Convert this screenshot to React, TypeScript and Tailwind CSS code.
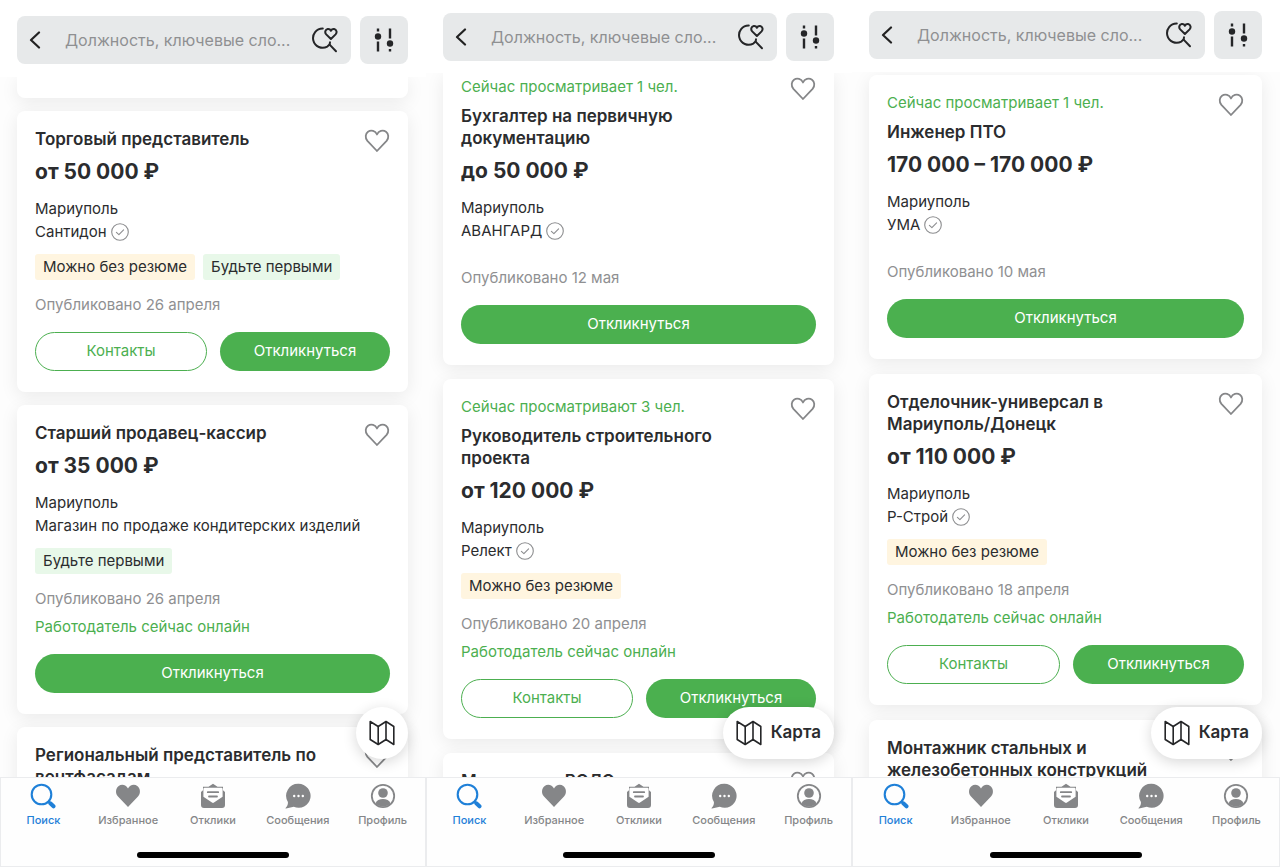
import React from "react";

type Job = {
  viewing?: string;
  title: string;
  salary?: string;
  city?: string;
  company?: string;
  verified?: boolean;
  noResume?: boolean;
  beFirst?: boolean;
  published?: string;
  online?: boolean;
  contacts?: boolean;
};

type Screen = {
  id: string;
  header: string;
  feed: string;
  scrolledTail?: boolean;
  scrolledFirst?: boolean;
  mapLabel?: boolean;
  jobs: Job[];
};

const screens: Screen[] = [
  {
    id: "a",
    header: "pt-4 pb-[13px]",
    feed: "gap-[13px]",
    scrolledTail: true,
    jobs: [
      {
        title: "Торговый представитель",
        salary: "от 50 000 ₽",
        city: "Мариуполь",
        company: "Сантидон",
        verified: true,
        noResume: true,
        beFirst: true,
        published: "Опубликовано 26 апреля",
        contacts: true,
      },
      {
        title: "Старший продавец-кассир",
        salary: "от 35 000 ₽",
        city: "Мариуполь",
        company: "Магазин по продаже кондитерских изделий",
        beFirst: true,
        published: "Опубликовано 26 апреля",
        online: true,
      },
      { title: "Региональный представитель по вентфасадам" },
    ],
  },
  {
    id: "b",
    header: "pt-[13px] pb-3",
    feed: "gap-[14px]",
    scrolledFirst: true,
    mapLabel: true,
    jobs: [
      {
        viewing: "Сейчас просматривает 1 чел.",
        title: "Бухгалтер на первичную документацию",
        salary: "до 50 000 ₽",
        city: "Мариуполь",
        company: "АВАНГАРД",
        verified: true,
        published: "Опубликовано 12 мая",
      },
      {
        viewing: "Сейчас просматривают 3 чел.",
        title: "Руководитель строительного проекта",
        salary: "от 120 000 ₽",
        city: "Мариуполь",
        company: "Релект",
        verified: true,
        noResume: true,
        published: "Опубликовано 20 апреля",
        online: true,
        contacts: true,
      },
      { title: "Монтажник ВОЛС" },
    ],
  },
  {
    id: "c",
    header: "pt-[11px] pb-[13px]",
    feed: "gap-[15px] pt-[3px]",
    mapLabel: true,
    jobs: [
      {
        viewing: "Сейчас просматривает 1 чел.",
        title: "Инженер ПТО",
        salary: "170 000 – 170 000 ₽",
        city: "Мариуполь",
        company: "УМА",
        verified: true,
        published: "Опубликовано 10 мая",
      },
      {
        title: "Отделочник-универсал в Мариуполь/Донецк",
        salary: "от 110 000 ₽",
        city: "Мариуполь",
        company: "Р-Строй",
        verified: true,
        noResume: true,
        published: "Опубликовано 18 апреля",
        online: true,
        contacts: true,
      },
      { title: "Монтажник стальных и железобетонных конструкций" },
    ],
  },
];

function BackIcon() {
  return (
    <svg width="12" height="18" viewBox="0 0 12 18" fill="none" stroke="#222" strokeWidth="2.2" strokeLinecap="round" strokeLinejoin="round" aria-hidden="true">
      <path d="M10 1.5 2 9l8 7.5" />
    </svg>
  );
}

function SearchHeartIcon() {
  return (
    <svg width="26" height="26" viewBox="0 0 26 26" fill="none" stroke="#252628" strokeWidth="2" strokeLinecap="round" strokeLinejoin="round" aria-hidden="true">
      <path d="M10.800 1.600A9.600 9.600 0 1 0 15.300 19.600L17.600 17.600" />
      <path d="M18 15.300 17.600 17.600 24 24.200" />
      <path d="M18.900 12 14.200 7.400C12.400 5.500 13.300 2.400 15.700 2c1.500-.2 2.700.6 3.200 1.800.6-1.200 1.700-2 3.200-1.800 2.500.4 3.300 3.500 1.500 5.400Z" />
    </svg>
  );
}

function FiltersIcon() {
  return (
    <svg width="20" height="26" viewBox="0 0 20 26" fill="none" stroke="#252628" strokeWidth="2.4" aria-hidden="true">
      <path d="M4 1.500v3M4 14.500v10M16 1.500v10M16 22v2.500" />
      <circle cx="4" cy="9.500" r="3.200" fill="#252628" stroke="none" />
      <circle cx="16" cy="16.500" r="3.200" fill="#252628" stroke="none" />
    </svg>
  );
}

function HeartIcon() {
  return (
    <svg width="26" height="24" viewBox="0 0 26 24" fill="none" stroke="#858688" strokeWidth="1.800" strokeLinejoin="round" aria-hidden="true">
      <path d="M13 22 3.400 11.800C.8 8.800 1.400 4.600 4 2.700 7.200.6 11.400 1.900 13 5.500 14.600 1.900 18.800.6 22 2.700c2.600 1.900 3.200 6.100.6 9.100Z" />
    </svg>
  );
}

function VerifiedIcon() {
  return (
    <svg width="18" height="18" viewBox="0 0 18 18" fill="none" stroke="#8c8d8f" strokeWidth="1.100" strokeLinecap="round" strokeLinejoin="round" role="img" aria-label="Проверенная компания">
      <circle cx="9" cy="9" r="8.300" />
      <path d="m5.400 9.300 2.500 2.300 4.700-4.700" />
    </svg>
  );
}

function MapIcon() {
  return (
    <svg width="26" height="26" viewBox="0 0 26 26" fill="none" stroke="#252628" strokeWidth="1.600" strokeLinejoin="round" aria-hidden="true">
      <path d="M1.200 1.500 9.200 6.500 17 1.500 24.800 6.500V24.500L17 19.500 9.200 24.500 1.200 19.500Z" />
      <path d="M9.200 6.500v18M17 1.500v18" />
    </svg>
  );
}

const tabs = [
  {
    label: "Поиск",
    active: true,
    icon: (
      <svg width="26" height="26" viewBox="0 0 26 26" fill="none" stroke="#1f80d8" strokeLinecap="round" aria-hidden="true">
        <circle cx="11.500" cy="11.500" r="9.800" strokeWidth="2.100" />
        <path d="m18.700 18.700 1.500 1.500" strokeWidth="2.300" />
        <path d="m20.300 20.300 3.200 3" strokeWidth="4" />
      </svg>
    ),
  },
  {
    label: "Избранное",
    icon: (
      <svg width="26" height="26" viewBox="0 0 26 26" fill="#858688" aria-hidden="true">
        <path d="M13 24 3 13.500C.1 10.300.5 5.100 3.700 2.900 7 .8 11.400 2 13 5.600 14.600 2 19 .8 22.300 2.900c3.200 2.200 3.600 7.400.7 10.600Z" />
      </svg>
    ),
  },
  {
    label: "Отклики",
    icon: (
      <svg width="26" height="26" viewBox="0 0 26 26" aria-hidden="true">
        <path fill="#858688" d="M8.500 3.800 13 .8l4.500 3H23v3.500l2 1.700V22a3 3 0 0 1-3 3H4a3 3 0 0 1-3-3V9l2-1.700V3.800Z" />
        <path fill="#fff" d="M4.600 4.800h16.800a1.200 1.200 0 0 1 1.200 1.200V13.800L14 19.600a1.800 1.800 0 0 1-2 0L3.400 13.800V6a1.200 1.200 0 0 1 1.200-1.200Z" />
        <path stroke="#858688" strokeWidth="1.800" strokeLinecap="round" d="M7.800 9.200h10.400M9 13.500h8" />
      </svg>
    ),
  },
  {
    label: "Сообщения",
    icon: (
      <svg width="26" height="26" viewBox="0 0 26 26" aria-hidden="true">
        <path fill="#858688" d="M13.500.8a12 12 0 1 1-4.700 23L1 25.500c-.6.1-.6-.4-.2-.8 1.800-1.700 2.300-3.500 2.100-5.700A12 12 0 0 1 13.500.8Z" />
        <path stroke="#fff" strokeWidth="2.400" strokeLinecap="round" d="M9.200 13h.01M13.500 13h.01M17.800 13h.01" />
      </svg>
    ),
  },
  {
    label: "Профиль",
    icon: (
      <svg width="26" height="26" viewBox="0 0 26 26" aria-hidden="true">
        <circle cx="13" cy="13" r="11.200" fill="none" stroke="#858688" strokeWidth="1.800" />
        <circle cx="13" cy="10" r="4.800" fill="#858688" />
        <path fill="#858688" d="M5.500 20.300c1.200-3.200 4-4.300 7.500-4.300s6.300 1.100 7.500 4.300c-1.900 2.100-4.600 3.300-7.500 3.300s-5.600-1.200-7.500-3.300Z" />
      </svg>
    ),
  },
];

function JobCard({ job, scrolled }: { job: Job; scrolled?: boolean }) {
  const hasBadges = job.noResume || job.beFirst;
  return (
    <article
      className={`rounded-lg bg-white px-[18px] pb-[21px] shadow-[0_4px_18px_rgba(0,0,0,0.08)] ${scrolled ? "rounded-t-none pt-[3px]" : "pt-[17px]"}`}
    >
      <div className="flex items-start justify-between">
        <div className="w-[290px] min-w-0">
          {job.viewing && <p className="mb-[7px] text-[15px] leading-[22px] text-[#4caf50]">{job.viewing}</p>}
          <h2 className="text-[17px] leading-[22px] font-semibold">{job.title}</h2>
        </div>
        <button type="button" aria-label="В избранное" className="flex h-[22px] shrink-0 items-start pt-px">
          <HeartIcon />
        </button>
      </div>
      {job.salary && (
        <>
          <p className="mt-2 text-[21px] leading-7 font-bold">{job.salary}</p>
          <p className="mt-[11px] text-[15px] leading-[23px]">{job.city}</p>
          <p className="flex items-center gap-1 text-[15px] leading-[23px] whitespace-nowrap">
            {job.company}
            {job.verified && <VerifiedIcon />}
          </p>
          {hasBadges && (
            <div className="mt-[11px] flex gap-2 text-[15px] leading-[26px] whitespace-nowrap">
              {job.noResume && <span className="rounded-[3px] bg-[#fff5e0] px-2">Можно без резюме</span>}
              {job.beFirst && <span className="rounded-[3px] bg-[#e8f8e9] px-2">Будьте первыми</span>}
            </div>
          )}
          <p className={`text-[15px] leading-[22px] text-[#8f9092] ${hasBadges ? "mt-[14px]" : "mt-[25px]"}`}>{job.published}</p>
          {job.online && <p className="mt-[6px] text-[15px] leading-[22px] text-[#4caf50]">Работодатель сейчас онлайн</p>}
          <div className="mt-4 flex gap-[13px] text-[15px]">
            {job.contacts && (
              <button type="button" className="h-[39px] flex-1 rounded-full border border-[#4caf50] text-[#4caf50]">
                Контакты
              </button>
            )}
            <button type="button" className="h-[39px] flex-1 rounded-full bg-[#4bb04f] text-white">
              Откликнуться
            </button>
          </div>
        </>
      )}
    </article>
  );
}

function Phone({ screen }: { screen: Screen }) {
  return (
    <section className="relative flex h-full min-w-0 flex-col overflow-hidden bg-white">
      <header className={`flex shrink-0 gap-[9px] pr-[18px] pl-[17px] ${screen.header}`}>
        <div className="flex h-12 min-w-0 flex-1 items-center rounded-lg bg-[#e7e9ea] pr-[13px] pl-3">
          <button type="button" aria-label="Назад" className="shrink-0">
            <BackIcon />
          </button>
          <input
            id={`query-${screen.id}`}
            type="text"
            aria-label="Поиск вакансий"
            placeholder="Должность, ключевые сло..."
            className="ml-6 h-full min-w-0 flex-1 bg-transparent text-[16px] outline-none placeholder:text-[#8f9092]"
          />
          <button type="button" aria-label="Сохранить поиск" className="shrink-0">
            <SearchHeartIcon />
          </button>
        </div>
        <button type="button" aria-label="Фильтры" className="flex size-12 shrink-0 items-center justify-center rounded-lg bg-[#e7e9ea]">
          <FiltersIcon />
        </button>
      </header>

      <div className="relative min-h-0 flex-1">
        <main className={`flex h-full flex-col overflow-hidden bg-[#fdfdfd] pr-[18px] pl-[17px] ${screen.feed}`}>
          {screen.scrolledTail && <div className="h-[21px] shrink-0 rounded-b-lg bg-white shadow-[0_4px_18px_rgba(0,0,0,0.08)]" />}
          {screen.jobs.map((job, i) => (
            <JobCard key={job.title} job={job} scrolled={screen.scrolledFirst && i === 0} />
          ))}
        </main>
        <button
          type="button"
          aria-label="Карта"
          className="absolute right-[18px] bottom-[18px] flex h-[52px] items-center gap-[9px] rounded-full bg-white px-[13px] text-[17px] font-semibold shadow-[0_3px_14px_rgba(0,0,0,0.16)]"
        >
          <MapIcon />
          {screen.mapLabel && <span>Карта</span>}
        </button>
      </div>

      <nav className="flex h-[90px] shrink-0 flex-col items-center justify-between border border-[#ebecee] bg-[#fefefe] pt-[5px] pb-2">
        <ul className="grid w-full grid-cols-5">
          {tabs.map((tab) => (
            <li key={tab.label}>
              <a href="#" className={`flex flex-col items-center gap-[3px] text-[11px] leading-4 font-medium ${tab.active ? "text-[#1f80d8]" : "text-[#858688]"}`}>
                {tab.icon}
                {tab.label}
              </a>
            </li>
          ))}
        </ul>
        <div className="h-[6px] w-[152px] rounded-full bg-black" />
      </nav>
    </section>
  );
}

export default function App() {
  return (
    <div className="grid h-screen grid-cols-[426fr_426fr_428fr] bg-white font-['Inter','Noto_Sans',sans-serif] text-[#2b2c2e]">
      {screens.map((screen) => (
        <Phone key={screen.id} screen={screen} />
      ))}
    </div>
  );
}
